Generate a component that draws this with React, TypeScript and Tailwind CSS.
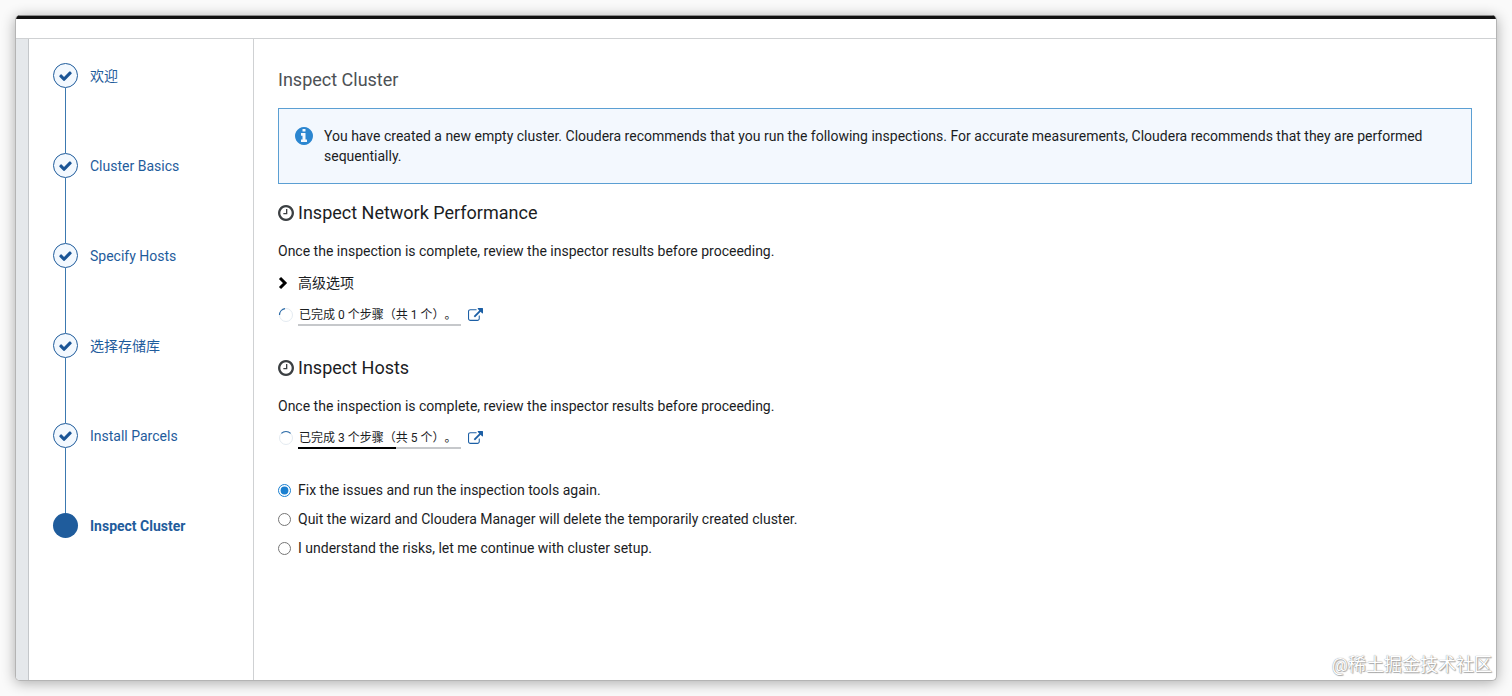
import { useState } from 'react';

const ICONS = {
  check: {
    viewBox: '121 286 1550 1236',
    path: 'M1671 566q0 40-28 68l-724 724-136 136q-28 28-68 28t-68-28l-136-136-362-362q-28-28-28-68t28-68l136-136q28-28 68-28t68 28l294 295 656-657q28-28 68-28t68 28l136 136q28 28 28 68z',
  },
  info: {
    viewBox: '128 128 1536 1536',
    path: 'M1152 1376v-160q0-14-9-23t-23-9h-96v-512q0-14-9-23t-23-9h-320q-14 0-23 9t-9 23v160q0 14 9 23t23 9h96v320h-96q-14 0-23 9t-9 23v160q0 14 9 23t23 9h448q14 0 23-9t9-23zm-128-896v-160q0-14-9-23t-23-9h-192q-14 0-23 9t-9 23v160q0 14 9 23t23 9h192q14 0 23-9t9-23zm640 416q0 209-103 385.5t-279.5 279.5-385.5 103-385.5-103-279.5-279.5-103-385.5 103-385.5 279.5-279.5 385.5-103 385.5 103 279.5 279.5 103 385.5z',
  },
  clock: {
    viewBox: '128 128 1536 1536',
    path: 'M1024 544v448q0 14-9 23t-23 9h-320q-14 0-23-9t-9-23v-64q0-14 9-23t23-9h224v-352q0-14 9-23t23-9h64q14 0 23 9t9 23zm416 352q0-148-73-273t-198-198-273-73-273 73-198 198-73 273 73 273 198 198 273 73 273-73 198-198 73-273zm224 0q0 209-103 385.5t-279.5 279.5-385.5 103-385.5-103-279.5-279.5-103-385.5 103-385.5 279.5-279.5 385.5-103 385.5 103 279.5 279.5 103 385.5z',
  },
  external: {
    viewBox: '0 0 1792 1536',
    path: 'M1408 928v320q0 119-84.5 203.5t-203.5 84.5h-832q-119 0-203.5-84.5t-84.5-203.5v-832q0-119 84.5-203.5t203.5-84.5h704q14 0 23 9t9 23v64q0 14-9 23t-23 9h-704q-66 0-113 47t-47 113v832q0 66 47 113t113 47h832q66 0 113-47t47-113v-320q0-14 9-23t23-9h64q14 0 23 9t9 23zm384-864v512q0 26-19 45t-45 19-45-19l-176-176-652 652q-10 10-23 10t-23-10l-114-114q-10-10-10-23t10-23l652-652-176-176q-19-19-19-45t19-45 45-19h512q26 0 45 19t19 45z',
  },
};

function Icon({ name, className }: { name: keyof typeof ICONS; className: string }) {
  return (
    <svg viewBox={ICONS[name].viewBox} fill="currentColor" className={`shrink-0 ${className}`} aria-hidden="true">
      <path d={ICONS[name].path} />
    </svg>
  );
}

const STEPS = ['欢迎', 'Cluster Basics', 'Specify Hosts', '选择存储库', 'Install Parcels', 'Inspect Cluster'];

const OPTIONS = [
  { value: 'fix', label: 'Fix the issues and run the inspection tools again.' },
  { value: 'quit', label: 'Quit the wizard and Cloudera Manager will delete the temporarily created cluster.' },
  { value: 'continue', label: 'I understand the risks, let me continue with cluster setup.' },
];

function StepList() {
  const current = STEPS.length - 1;

  return (
    <nav className="w-[225px] shrink-0 border-r border-[#cfd1d3] pt-6 pl-6">
      <ol>
        {STEPS.map((step, i) => (
          <li key={step} className="flex gap-3">
            <div className="flex flex-col items-center">
              {i === current ? (
                <span className="size-[25px] rounded-full bg-[#1f5c9c]" />
              ) : (
                <>
                  <span className="flex size-[25px] items-center justify-center rounded-full border border-[#1f5c9c] bg-[#f2f8fe] text-[#1a5596]">
                    <Icon name="check" className="h-[10px] w-[13px]" />
                  </span>
                  <span className="h-[65px] w-px bg-[#3c79b0]" />
                </>
              )}
            </div>
            <a href="#" className={`h-[25px] leading-[26px] text-[#1f5c9c] ${i === current ? 'font-bold' : ''}`}>{step}</a>
          </li>
        ))}
      </ol>
    </nav>
  );
}

function Progress({ done, total, spin }: { done: number; total: number; spin: string }) {
  return (
    <div className="flex items-start">
      <svg viewBox="0 0 16 16" fill="none" className="mt-[2px] size-4 shrink-0" aria-hidden="true">
        <circle cx="8" cy="8" r="6.5" stroke="#e4ebf1" />
        <path d={spin} stroke="#2c6ba8" strokeWidth="1.2" />
      </svg>
      <div className="ml-1 w-[163px]">
        <p className="h-[19px] pl-px text-[12px] leading-[21px] whitespace-nowrap [text-spacing-trim:space-all]">已完成 {done} 个步骤（共 {total} 个）。</p>
        <div className="h-[2px] bg-[#c6c8cb]">
          <div className="h-full bg-black" style={{ width: `${(done / total) * 100}%` }} />
        </div>
      </div>
      <a href="#" aria-label="Details" className="mt-[3px] ml-[7px] text-[#1c5fa5]">
        <Icon name="external" className="h-[13px] w-[15px]" />
      </a>
    </div>
  );
}

function SectionTitle({ children }: { children: string }) {
  return (
    <h2 className="flex items-center gap-1 text-[18px] leading-6">
      <Icon name="clock" className="size-4 text-[#3c4043]" />
      {children}
    </h2>
  );
}

export default function App() {
  const [choice, setChoice] = useState('fix');

  return (
    <div className="flex min-h-screen flex-col bg-[#fafafa] p-[15px] font-['Roboto','Noto_Sans_CJK_SC',sans-serif] text-[14px] leading-5 text-[#1b1d1f]">
      <div className="relative flex flex-1 flex-col overflow-hidden rounded-[5px] border border-t-0 border-[#b4b4b4] bg-white shadow-[0_2px_14px_rgba(0,0,0,0.32)]">
        <div className="h-1 border-t border-[#8c8c8c] bg-[#121212]" />
        <header className="h-5 border-b border-[#cfd1d3]" />
        <div className="flex flex-1">
          <div className="w-[13px] shrink-0 border-r border-[#c4c7ca] bg-[#e5e8eb]" />
          <StepList />
          <main className="flex-1 px-6 pt-[29px]">
            <h1 className="text-[18px] leading-6 text-[#4d5155]">Inspect Cluster</h1>

            <div className="mt-4 flex gap-[11px] border border-[#5b9fd3] bg-[#f3f8fe] px-4 py-[17px]">
              <Icon name="info" className="mt-px size-[18px] text-[#2b86d0]" />
              <p>
                You have created a new empty cluster. Cloudera recommends that you run the following inspections. For accurate measurements, Cloudera recommends that they are performed sequentially.
              </p>
            </div>

            <section className="mt-[17px]">
              <SectionTitle>Inspect Network Performance</SectionTitle>
              <p className="mt-4">Once the inspection is complete, review the inspector results before proceeding.</p>
              <button type="button" className="my-3 flex items-center gap-[10px]">
                <svg viewBox="0 0 10 14" fill="none" className="h-[14px] w-[10px]" aria-hidden="true">
                  <path d="M2 2L7 7L2 12" stroke="#000" strokeWidth="3" />
                </svg>
                高级选项
              </button>
              <Progress done={0} total={1} spin="M1.5 8A6.5 6.5 0 0 1 7 1.6" />
            </section>

            <section className="mt-[30px]">
              <SectionTitle>Inspect Hosts</SectionTitle>
              <p className="mt-4 mb-3">Once the inspection is complete, review the inspector results before proceeding.</p>
              <Progress done={3} total={5} spin="M3.4 3.4A6.5 6.5 0 0 1 12.6 3.4" />
            </section>

            <div className="mt-[31px] flex flex-col gap-[9px]">
              {OPTIONS.map((o) => (
                <label key={o.value} className="flex items-center gap-[7px]">
                  <input type="radio" name="next" value={o.value} checked={choice === o.value} onChange={() => setChoice(o.value)} className="size-[13px] accent-[#1a7fd0]" />
                  {o.label}
                </label>
              ))}
            </div>
          </main>
        </div>
        <span className="absolute right-1 bottom-[3px] text-[18px] leading-6 text-white [text-shadow:0_0_1px_#777,1px_1px_1px_#aaa]">@稀土掘金技术社区</span>
      </div>
    </div>
  );
}
